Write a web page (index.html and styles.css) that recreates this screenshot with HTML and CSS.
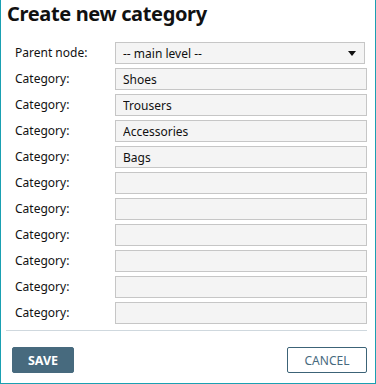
FILE: index.html
```html
<!DOCTYPE html>
<html lang="en">
<head>
    <meta charset="UTF-8">
    <title>Create new category</title>
    <link rel="stylesheet" href="styles.css">
</head>
<body>

<div class="dialog">
    <h2>Create new category</h2>

    <div class="form">
        <label>Parent node:</label>
        <div class="select">
            <span>-- main level --</span>
            <svg class="caret" width="8" height="5" viewBox="0 0 8 5"><path d="M0 0H8L4 5Z" fill="#111"/></svg>
        </div>

        <label>Category:</label>
        <input type="text" value="Shoes">
        <label>Category:</label>
        <input type="text" value="Trousers">
        <label>Category:</label>
        <input type="text" value="Accessories">
        <label>Category:</label>
        <input type="text" value="Bags">
        <label>Category:</label>
        <input type="text">
        <label>Category:</label>
        <input type="text">
        <label>Category:</label>
        <input type="text">
        <label>Category:</label>
        <input type="text">
        <label>Category:</label>
        <input type="text">
        <label>Category:</label>
        <input type="text">
    </div>

    <div class="buttons">
        <button class="btn-save">SAVE</button>
        <button class="btn-cancel">CANCEL</button>
    </div>
</div>

</body>
</html>
```

FILE: styles.css
```css
body {
    margin: 0;
    font-family: "Noto Sans", "Open Sans", sans-serif;
    color: #111;
}
.dialog {
    width: 376px;
    height: 384px;
    box-sizing: border-box;
    border: 1px solid #1aa0b2;
    border-top: none;
    background: #fff;
}
h2 {
    margin: 0;
    padding: 1px 0 0 6px;
    font-size: 20px;
    line-height: 26px;
    font-weight: bold;
    letter-spacing: -0.35px;
}
.form {
    display: grid;
    grid-template-columns: 100px 1fr;
    row-gap: 4px;
    padding: 15px 8px 0 14px;
    font-size: 12px;
}
.form label {
    line-height: 22px;
}
.select, input {
    height: 22px;
    box-sizing: border-box;
    border: 1px solid #c6c6c6;
    background: #f4f4f4;
    font: inherit;
    color: #111;
    padding: 0 7px;
    margin: 0;
}
.select {
    display: flex;
    align-items: center;
    justify-content: space-between;
    margin-right: 2px;
}
.caret {
    margin-right: 1px;
}
.buttons {
    display: flex;
    justify-content: space-between;
    margin: 6px 8px 0 5px;
    padding: 16px 0 0 6px;
    border-top: 1px solid #cfd8de;
}
button {
    height: 26px;
    font-family: inherit;
    font-size: 12px;
    border-radius: 2px;
    cursor: pointer;
}
.btn-save {
    width: 62px;
    background: #476a7e;
    border: 1px solid #476a7e;
    color: #fff;
    font-weight: bold;
    font-size: 12.5px;
}
.btn-cancel {
    width: 80px;
    background: #fff;
    border: 1px solid #3c6377;
    color: #476a7e;
}
```
